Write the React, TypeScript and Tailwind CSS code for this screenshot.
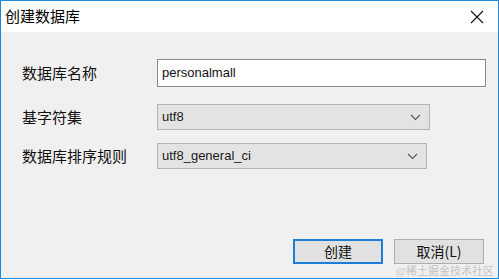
const cjk = "font-['Microsoft_YaHei','Noto_Sans_CJK_SC',sans-serif]";

const Chevron = () => (
  <svg width="11" height="7" viewBox="0 0 11 7" className="shrink-0">
    <path d="M1 1l4.5 4.5L10 1" fill="none" stroke="#5a5a5a" strokeWidth="1.2" />
  </svg>
);

const Select = ({ value, width }: { value: string; width: string }) => (
  <div
    className={`flex h-[26px] ${width} items-center justify-between border border-[#b4b4b4] bg-[#e3e3e3] pl-[4px] pr-[8px] font-['Liberation_Sans',sans-serif] text-[13px] text-[#1a1a1a]`}
  >
    <span>{value}</span>
    <Chevron />
  </div>
);

export default function App() {
  return (
    <div className="h-[280px] w-[499px] bg-white">
      <div className="relative flex h-[279px] w-[499px] flex-col border border-[#1e87d9]">
        <div className="flex h-[31px] items-center justify-between bg-white pl-[4px] pr-[14px]">
          <span className={`${cjk} text-[15px] text-black`}>创建数据库</span>
          <svg width="14" height="14" viewBox="0 0 14 14">
            <path d="M1 1l12 12M13 1L1 13" stroke="#111" strokeWidth="1.1" />
          </svg>
        </div>
        <div className="flex flex-1 flex-col bg-[#f0f0f0] pl-[21px] pr-[11px] pt-[27px]">
          <div className="flex h-[28px] items-center">
            <span className={`${cjk} w-[135px] text-[15px] text-[#111]`}>数据库名称</span>
            <div className="flex h-[28px] w-[329px] items-center border border-[#8a8a8a] bg-white pl-[4px] font-['Liberation_Sans',sans-serif] text-[13px] text-[#111]">
              personalmall
            </div>
          </div>
          <div className="mt-[17px] flex h-[26px] items-center">
            <span className={`${cjk} w-[135px] text-[15px] text-[#111]`}>基字符集</span>
            <Select value="utf8" width="w-[273px]" />
          </div>
          <div className="mt-[13px] flex h-[26px] items-center">
            <span className={`${cjk} w-[135px] text-[15px] text-[#111]`}>数据库排序规则</span>
            <Select value="utf8_general_ci" width="w-[270px]" />
          </div>
          <div className="mt-[70px] flex justify-end gap-[11px] pr-[3px]">
            <button className={`${cjk} h-[25px] w-[90px] border-2 border-[#1a7fd8] bg-[#e1e1e1] text-[14px] text-[#111]`}>
              创建
            </button>
            <button className={`${cjk} h-[25px] w-[90px] border border-[#adadad] bg-[#e1e1e1] text-[14px] text-[#111]`}>
              取消(L)
            </button>
          </div>
        </div>
        <span className="absolute bottom-[1px] right-[4px] font-['Liberation_Serif','Noto_Sans_CJK_SC',serif] text-[11px] leading-none text-[#c4c4c4]">
          @稀土掘金技术社区
        </span>
      </div>
    </div>
  );
}
